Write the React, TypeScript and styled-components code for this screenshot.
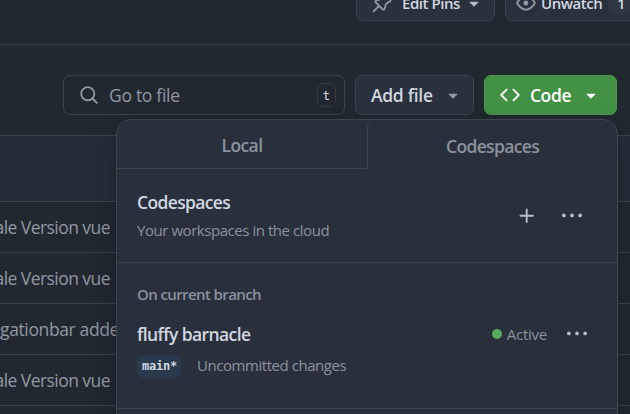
import React from "react";
import styled, { createGlobalStyle } from "styled-components";

const Global = createGlobalStyle`
  * { box-sizing: border-box; }
  body { margin: 0; background: #212830; overflow: hidden; }
`;

const line = "#3d444d";
const muted = "#9198a1";

const paths = {
  pin: "m11.294.984 3.722 3.722a1.75 1.75 0 0 1-.504 2.826l-1.327.613a3.089 3.089 0 0 0-1.707 2.084l-.584 2.454c-.317 1.332-1.972 1.8-2.94.832L5.75 11.311 1.78 15.28a.749.749 0 1 1-1.06-1.06l3.969-3.97-2.204-2.204c-.968-.968-.5-2.623.832-2.94l2.454-.584a3.08 3.08 0 0 0 2.084-1.707l.613-1.327a1.75 1.75 0 0 1 2.826-.504ZM6.283 9.723l2.732 2.731a.25.25 0 0 0 .42-.119l.584-2.454a4.586 4.586 0 0 1 2.537-3.098l1.328-.613a.25.25 0 0 0 .072-.404l-3.722-3.722a.25.25 0 0 0-.404.072l-.613 1.328a4.584 4.584 0 0 1-3.098 2.537l-2.454.584a.25.25 0 0 0-.119.42l2.731 2.732Z",
  eye: "M8 2c1.981 0 3.671.992 4.933 2.078 1.27 1.091 2.187 2.345 2.637 3.023a1.62 1.62 0 0 1 0 1.798c-.45.678-1.367 1.932-2.637 3.023C11.67 13.008 9.981 14 8 14c-1.981 0-3.671-.992-4.933-2.078C1.797 10.83.88 9.576.43 8.898a1.62 1.62 0 0 1 0-1.798c.45-.677 1.367-1.931 2.637-3.022C4.33 2.992 6.019 2 8 2ZM1.679 7.932a.12.12 0 0 0 0 .136c.411.622 1.241 1.75 2.366 2.717C5.176 11.758 6.527 12.5 8 12.5c1.473 0 2.825-.742 3.955-1.715 1.124-.967 1.954-2.096 2.366-2.717a.12.12 0 0 0 0-.136c-.412-.621-1.242-1.75-2.366-2.717C10.824 4.242 9.473 3.5 8 3.5c-1.473 0-2.825.742-3.955 1.715-1.124.967-1.954 2.096-2.366 2.717ZM8 10a2 2 0 1 1-.001-3.999A2 2 0 0 1 8 10Z",
  down: "m4.427 7.427 3.396 3.396a.25.25 0 0 0 .354 0l3.396-3.396A.25.25 0 0 0 11.396 7H4.604a.25.25 0 0 0-.177.427Z",
  search: "M10.68 11.74a6 6 0 0 1-7.922-8.982 6 6 0 0 1 8.982 7.922l3.04 3.04a.749.749 0 0 1-.326 1.275.749.749 0 0 1-.734-.215ZM11.5 7a4.499 4.499 0 1 0-8.997 0A4.499 4.499 0 0 0 11.5 7Z",
  code: "m11.28 3.22 4.25 4.25a.75.75 0 0 1 0 1.06l-4.25 4.25a.749.749 0 0 1-1.275-.326.749.749 0 0 1 .215-.734L13.94 8l-3.72-3.72a.749.749 0 0 1 .326-1.275.749.749 0 0 1 .734.215Zm-6.56 0a.751.751 0 0 1 1.042.018.751.751 0 0 1 .018 1.042L2.06 8l3.72 3.72a.749.749 0 0 1-.326 1.275.749.749 0 0 1-.734-.215L.47 8.53a.75.75 0 0 1 0-1.06Z",
  plus: "M7.75 2a.75.75 0 0 1 .75.75V7h4.25a.75.75 0 0 1 0 1.5H8.5v4.25a.75.75 0 0 1-1.5 0V8.5H2.75a.75.75 0 0 1 0-1.5H7V2.75A.75.75 0 0 1 7.75 2Z",
  kebab: "M8 9a1.5 1.5 0 1 0 0-3 1.5 1.5 0 0 0 0 3ZM1.5 9a1.5 1.5 0 1 0 0-3 1.5 1.5 0 0 0 0 3Zm13 0a1.5 1.5 0 1 0 0-3 1.5 1.5 0 0 0 0 3Z",
};

const Svg = styled.svg<{ $tone?: string }>`
  flex: none;
  display: block;
  width: 20px;
  height: 20px;
  fill: ${(p) => p.$tone ?? muted};
`;

const Icon = ({ name, tone }: { name: keyof typeof paths; tone?: string }) => (
  <Svg viewBox="0 0 16 16" $tone={tone} aria-hidden="true">
    <path d={paths[name]} />
  </Svg>
);

const Text = styled.span<{ $size?: number; $weight?: number; $tone?: string; $track?: number }>`
  font-size: ${(p) => p.$size ?? 17.5}px;
  font-weight: ${(p) => p.$weight ?? 400};
  color: ${(p) => p.$tone ?? muted};
  letter-spacing: ${(p) => p.$track ?? 0}px;
  white-space: nowrap;
`;

const Page = styled.div`
  position: relative;
  width: 630px;
  height: 414px;
  overflow: hidden;
  font-family: "Open Sans", "Noto Sans", sans-serif;
  line-height: 24px;
`;

const RepoBar = styled.header`
  display: flex;
  gap: 10px;
  height: 45px;
  padding-left: 356px;
  border-bottom: 1px solid ${line};
`;

const RepoButton = styled.button<{ $width: number; $pad: number }>`
  flex: none;
  display: flex;
  align-items: center;
  width: ${(p) => p.$width}px;
  height: 36px;
  margin-top: -15px;
  padding: 0 0 1px ${(p) => p.$pad}px;
  background: #2a313c;
  border: 1px solid ${line};
  border-radius: 7px;
  font: inherit;
`;

const RepoLabel = styled.span<{ $gap: number }>`
  width: 58px;
  margin-left: ${(p) => p.$gap}px;
  margin-right: 4px;
  font-size: 15px;
  font-weight: 600;
  letter-spacing: -0.45px;
  line-height: 20px;
  white-space: nowrap;
  color: #d1d7e0;
`;

const Counter = styled.span`
  margin-left: 5px;
  width: 26px;
  height: 24px;
  padding-left: 9px;
  border-radius: 12px;
  background: #2f3742;
  color: #d1d7e0;
  font-size: 15px;
  font-weight: 600;
  text-align: left;
`;

const Toolbar = styled.div`
  display: flex;
  gap: 10px;
  padding: 30px 13px 0 63px;
`;

const SearchBox = styled.div`
  display: flex;
  align-items: center;
  width: 282px;
  height: 40px;
  padding: 0 8px 0 15px;
  border: 1px solid ${line};
  border-radius: 7px;
`;

const SearchHint = styled(Text)`
  flex: 1;
  margin-left: 10px;
  padding-bottom: 1px;
`;

const Key = styled.kbd`
  width: 19px;
  height: 24px;
  border: 1px solid #363d46;
  border-radius: 7px;
  font: 13px/23px "DejaVu Sans Mono", monospace;
  text-align: center;
  color: #d1d7e0;
`;

const ActionButton = styled.button<{ $primary?: boolean }>`
  display: flex;
  align-items: center;
  justify-content: space-between;
  width: ${(p) => (p.$primary ? 133 : 119)}px;
  height: 40px;
  padding: 0 ${(p) => (p.$primary ? 15 : 10)}px 0 15px;
  background: ${(p) => (p.$primary ? "#429145" : "#2a313c")};
  border: 1px solid ${(p) => (p.$primary ? "#4b9850" : line)};
  border-radius: 7px;
  font: inherit;
`;

const Files = styled.section`
  margin-top: 20px;
  border-top: 1px solid ${line};
`;

const FilesHead = styled.div`
  height: 66px;
  background: #262c36;
  border-bottom: 1px solid ${line};
`;

const FileRow = styled.div`
  display: flex;
  align-items: center;
  justify-content: flex-end;
  width: 630px;
  height: 51px;
  padding-right: 520px;
  border-bottom: 1px solid ${line};
`;

const CutRow = styled(FileRow)`
  justify-content: flex-start;
  padding-right: 0;
`;

const Menu = styled.div`
  position: absolute;
  left: 116px;
  top: 119px;
  width: 502px;
  height: 320px;
  background: #2a303b;
  border: 1px solid ${line};
  border-radius: 15px;
  box-shadow: 0 8px 24px rgba(1, 4, 9, 0.25);
`;

const Tabs = styled.div`
  display: grid;
  grid-template-columns: 250px 250px;
  height: 50px;
`;

const Tab = styled.div<{ $active?: boolean }>`
  display: flex;
  align-items: center;
  justify-content: center;
  height: ${(p) => (p.$active ? 50 : 49)}px;
  padding-top: ${(p) => (p.$active ? 1 : 2)}px;
  border: 0 solid ${line};
  border-width: ${(p) => (p.$active ? "0 0 0 1px" : "0 0 1px 0")};
  border-top-left-radius: ${(p) => (p.$active ? 7 : 0)}px;
`;

const MenuHead = styled.div`
  display: flex;
  align-items: center;
  height: 93px;
  padding: 0 35px 0 20px;
  border-bottom: 1px solid ${line};
`;

const Titles = styled.div`
  display: flex;
  flex-direction: column;
  flex: 1;
  gap: 4px;
`;

const IconPair = styled.div`
  display: flex;
  gap: 25px;
`;

const Branch = styled.div`
  height: 146px;
  padding: 19px 30px 0 20px;
  border-bottom: 1px solid ${line};
`;

const Workspace = styled.div`
  display: flex;
  align-items: center;
  height: 24px;
  margin-top: 16px;
`;

const Status = styled.div`
  display: flex;
  align-items: center;
  gap: 5px;
  margin-left: auto;
  margin-right: 20px;
`;

const Dot = styled.span`
  width: 10px;
  height: 10px;
  border-radius: 50%;
  background: #57ab5a;
`;

const Details = styled.div`
  display: flex;
  align-items: center;
  gap: 15px;
  margin-top: 7px;
`;

const Note = styled(Text)`
  padding-bottom: 2px;
`;

const BranchTag = styled.code`
  width: 45px;
  height: 23px;
  border-radius: 7px;
  background: #2b394d;
  color: #d1d7e0;
  font: bold 12px/23px "DejaVu Sans Mono", monospace;
  letter-spacing: -0.2px;
  text-align: center;
`;

export default function App() {
  return (
    <Page>
      <Global />
      <RepoBar>
        <RepoButton $width={139} $pad={15}>
          <Icon name="pin" />
          <RepoLabel $gap={10}>Edit Pins</RepoLabel>
          <Icon name="down" tone="#b7bdc8" />
        </RepoButton>
        <RepoButton $width={160} $pad={10}>
          <Icon name="eye" />
          <RepoLabel $gap={5}>Unwatch</RepoLabel>
          <Counter>1</Counter>
        </RepoButton>
      </RepoBar>
      <Toolbar>
        <SearchBox>
          <Icon name="search" />
          <SearchHint $track={-0.3}>Go to file</SearchHint>
          <Key>t</Key>
        </SearchBox>
        <ActionButton>
          <Text $weight={600} $tone="#d1d7e0" $track={-0.3}>Add file</Text>
          <Icon name="down" />
        </ActionButton>
        <ActionButton $primary>
          <Icon name="code" tone="#fff" />
          <Text $weight={600} $tone="#fff" $track={-0.4}>Code</Text>
          <Icon name="down" tone="#fff" />
        </ActionButton>
      </Toolbar>
      <Files>
        <FilesHead />
        <FileRow><Text $track={-0.55}>ale Version vue</Text></FileRow>
        <FileRow><Text $track={-0.55}>ale Version vue</Text></FileRow>
        <CutRow><Text $track={-0.37}>gationbar adde</Text></CutRow>
        <FileRow><Text $track={-0.55}>ale Version vue</Text></FileRow>
      </Files>
      <Menu>
        <Tabs>
          <Tab><Text $weight={600} $tone="#8b929d" $track={-0.6}>Local</Text></Tab>
          <Tab $active><Text $weight={600} $tone="#8b929d" $track={-0.65}>Codespaces</Text></Tab>
        </Tabs>
        <MenuHead>
          <Titles>
            <Text $weight={600} $tone="#d1d7e0" $track={-0.65}>Codespaces</Text>
            <Text $size={15} $tone="#8b929d" $track={-0.45}>Your workspaces in the cloud</Text>
          </Titles>
          <IconPair>
            <Icon name="plus" tone="#b7bdc8" />
            <Icon name="kebab" tone="#b7bdc8" />
          </IconPair>
        </MenuHead>
        <Branch>
          <Text $size={15} $weight={600} $tone="#8b929d" $track={-0.6}>On current branch</Text>
          <Workspace>
            <Text $weight={600} $tone="#d1d7e0" $track={-0.6}>fluffy barnacle</Text>
            <Status>
              <Dot />
              <Text $size={15} $tone="#8b929d" $track={-0.25}>Active</Text>
            </Status>
            <Icon name="kebab" tone="#b7bdc8" />
          </Workspace>
          <Details>
            <BranchTag>main*</BranchTag>
            <Note $size={15} $tone="#8b929d" $track={-0.45}>Uncommitted changes</Note>
          </Details>
        </Branch>
      </Menu>
    </Page>
  );
}
